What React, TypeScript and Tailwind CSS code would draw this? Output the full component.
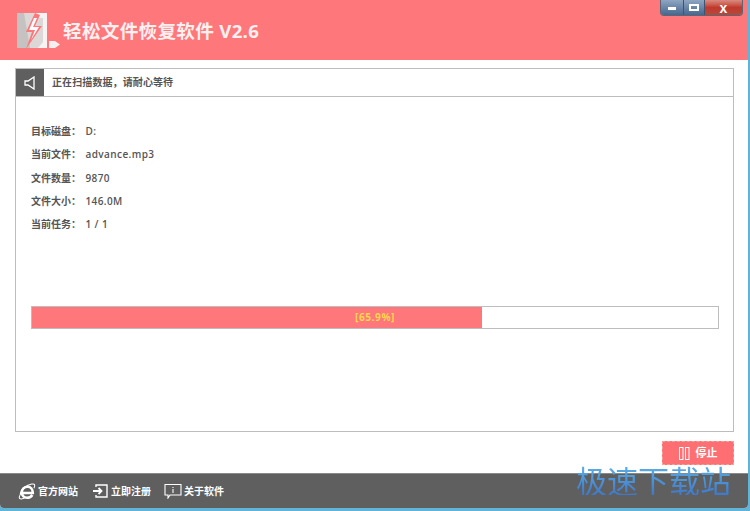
import React from "react";

const cjk = "font-['Open_Sans','Noto_Sans_CJK_SC',sans-serif]";

function Logo() {
  return (
    <svg width="44" height="40" viewBox="0 0 44 40" className="shrink-0">
      <path d="M1 2H31V37H1Z" fill="#dcd8d8" />
      <path d="M1 2H8L14 37H1Z" fill="#c6c2c2" />
      <path d="M20 2H31V37H22L27 31V7H20Z" fill="#f7f3f3" />
      <path d="M19 2L10 21H16L10 38L26 15H19L24 4Z" fill="#fe777b" />
      <path d="M18 7L13 19H19L15 29L23 16H17L21 7Z" fill="#ffffff" />
      <path d="M33 30H39L44 33.5L39 37H33Z" fill="#f3efef" />
    </svg>
  );
}

function WindowButtons() {
  return (
    <div className="absolute right-[5px] top-0 flex h-[16px] w-[83px] overflow-hidden rounded-b-[4px] border border-t-0 border-[#5d6673]">
      <div className="flex w-[23px] items-center justify-center border-r border-[#3d5573] bg-gradient-to-b from-[#8fa6c2] to-[#47678f]">
        <div className="mt-[2px] h-[3px] w-[8px] bg-white" />
      </div>
      <div className="flex w-[21px] items-center justify-center border-r border-[#3d5573] bg-gradient-to-b from-[#8fa6c2] to-[#47678f]">
        <div className="h-[7px] w-[10px] border-2 border-white" />
      </div>
      <div className="flex flex-1 items-center justify-center bg-gradient-to-b from-[#d98a80] via-[#c0392b] to-[#b5493e]">
        <span className="font-['Liberation_Sans',sans-serif] text-[14px] font-bold leading-none text-white">x</span>
      </div>
    </div>
  );
}

function Row({ label, value }: { label: string; value: string }) {
  return (
    <div className="flex h-[23.3px] items-center text-[10px] font-semibold text-[#555555]">
      <span className="w-[54.5px] whitespace-pre">{label}</span>
      <span className="tracking-[0.4px]">{value}</span>
    </div>
  );
}

function FooterLink({ icon, label, width }: { icon: React.ReactNode; label: string; width: string }) {
  return (
    <div className={`flex items-center gap-[2px] ${width}`}>
      {icon}
      <span className="pt-[1px] text-[10px] font-semibold text-white">{label}</span>
    </div>
  );
}

export default function App() {
  return (
    <div className={`relative h-[511px] w-[750px] overflow-hidden bg-[#5fb4d8] ${cjk}`}>
      <div className="flex h-[508px] w-[748px] flex-col overflow-hidden rounded-b-[4px] bg-white">
        <header className="relative flex h-[60px] items-center bg-[#fe777b] pl-[16px] pt-[1px]">
          <Logo />
          <h1 className="ml-[3px] text-[18.6px] font-bold tracking-[0.3px] text-[#fdf0f0]">轻松文件恢复软件 V2.6</h1>
          <WindowButtons />
        </header>

        <main className="flex min-h-0 flex-1 flex-col pl-[15px] pr-[14px] pt-[8px]">
          <section className="flex h-[364px] flex-col border border-[#bdbdbd]">
            <div className="flex h-[28px] shrink-0 items-center border-b border-[#bdbdbd]">
              <div className="flex h-full w-[28px] items-center justify-center bg-[#5f5f5f]">
                <svg width="12" height="14" viewBox="0 0 12 14" fill="none" stroke="#fff" strokeWidth="1.3">
                  <path d="M1 5H4L10 1V13L4 9H1Z" />
                </svg>
              </div>
              <span className="ml-[8px] text-[10px] font-semibold tracking-[0.1px] text-[#555555]">正在扫描数据，请耐心等待</span>
            </div>

            <div className="pl-[15px] pr-[14px] pt-[23px]">
              <Row label="目标磁盘：" value="D:" />
              <Row label="当前文件：" value="advance.mp3" />
              <Row label="文件数量：" value="9870" />
              <Row label="文件大小：" value="146.0M" />
              <Row label="当前任务：" value="1 / 1" />

              <div className="relative mt-[70px] flex h-[23px] border border-[#bdbdbd]">
                <div className="h-full w-[65.6%] bg-[#fe777b]" />
                <span className="absolute inset-0 flex items-center justify-center text-[10px] font-bold tracking-[0.6px] text-[#ffd84a]">
                  [65.9%]
                </span>
              </div>
            </div>
          </section>

          <div className="mt-[9px] flex justify-end">
            <button className="flex h-[24px] w-[72px] items-center justify-center gap-[6px] border border-dashed border-[#fb9f98] bg-[#fd6f72] text-[11px] font-semibold text-white">
              <svg width="11" height="13" viewBox="0 0 11 13" fill="none" stroke="#fff" strokeWidth="1">
                <rect x="0.5" y="0.5" width="3.5" height="12" />
                <rect x="6.5" y="0.5" width="3.5" height="12" />
              </svg>
              停止
            </button>
          </div>
        </main>

        <footer className="flex h-[35px] shrink-0 items-center border-t border-[#8a8a8a] bg-[#5f5f5f] pl-[18px]">
          <FooterLink
            width="w-[74px]"
            label="官方网站"
            icon={
              <svg width="18" height="17" viewBox="0 0 17 16" fill="none">
                <path d="M4 9.5H14C14 6 12 3.5 9 3.5C6 3.5 3.5 6 3.5 9C3.5 12 6 14 8.5 14C11 14 12.5 13 13.5 11.3" stroke="#fff" strokeWidth="2.4" />
                <path d="M2 10C3 6 8 2 13 1C16 0.5 16.5 2 15 5M4 8C1 12 0 15 3 15C4.5 15 6 14.4 7 13.6" stroke="#fff" strokeWidth="1" />
              </svg>
            }
          />
          <FooterLink
            width="w-[72px]"
            label="立即注册"
            icon={
              <svg width="17" height="16" viewBox="0 0 17 16" fill="none" stroke="#fff" strokeWidth="1.4">
                <path d="M4 4V2H15V14H4V12" />
                <path d="M1 8H9M6.5 5L9.5 8L6.5 11" strokeWidth="1.8" />
              </svg>
            }
          />
          <FooterLink
            width="w-[80px]"
            label="关于软件"
            icon={
              <svg width="18" height="16" viewBox="0 0 18 16" fill="none" stroke="#fff" strokeWidth="1.1">
                <path d="M1 1.5H17V12H6L4 15V12H1Z" />
                <path d="M9 4V5M9 6V10" />
              </svg>
            }
          />
        </footer>
      </div>

      <div className="absolute left-[576px] top-[465px] whitespace-nowrap bg-gradient-to-b from-[#5cb0e6] to-[#3f78c8] bg-clip-text font-['Noto_Sans_CJK_SC',sans-serif] text-[31px] leading-[30px] text-transparent">
        极速下载站
      </div>
    </div>
  );
}
